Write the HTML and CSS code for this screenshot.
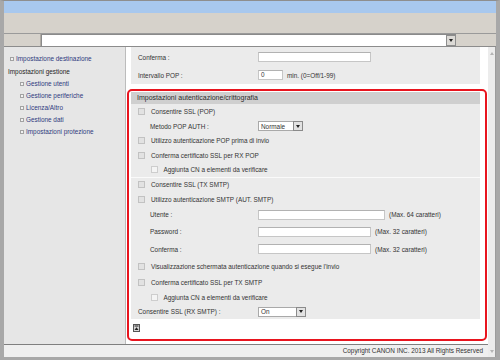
FILE: index.html
```html
<!DOCTYPE html>
<html lang="it">
<head>
<meta charset="utf-8">
<title>Impostazioni</title>
<link rel="stylesheet" href="styles.css">
</head>
<body>
<div class="window">
  <div class="titlebar"></div>
  <div class="toolbar"></div>
  <div class="addrbar">
    <div class="addr-left"></div>
    <div class="addr-input"><span class="addr-btn"><span class="tri-down"></span></span></div>
  </div>
  <div class="main">
    <div class="page">
      <div class="body">
        <nav class="nav">
          <div class="nav-item first"><span class="bullet"></span><span class="link">Impostazione destinazione</span></div>
          <div class="nav-item group">Impostazioni gestione</div>
          <div class="nav-item sub"><span class="bullet"></span><span class="link">Gestione utenti</span></div>
          <div class="nav-item sub"><span class="bullet"></span><span class="link">Gestione periferiche</span></div>
          <div class="nav-item sub"><span class="bullet"></span><span class="link">Licenza/Altro</span></div>
          <div class="nav-item sub"><span class="bullet"></span><span class="link">Gestione dati</span></div>
          <div class="nav-item sub"><span class="bullet"></span><span class="link">Impostazioni protezione</span></div>
        </nav>
        <div class="content">
          <div class="section top-section">
            <div class="frow"><span class="lbl">Conferma :</span><span class="input w113"></span></div>
            <div class="frow"><span class="lbl">Intervallo POP :</span><span class="input w25">0</span><span class="note">min. (0=Off/1-99)</span></div>
          </div>
          <div class="redbox">
            <div class="section">
              <div class="sec-head">Impostazioni autenticazione/crittografia</div>
              <div class="row r15"><span class="cb"></span>Consentire SSL (POP)</div>
              <div class="row sub"><span class="lbl">Metodo POP AUTH :</span><span class="select w45"><span class="sel-text">Normale</span><span class="sel-btn"><span class="tri-down"></span></span></span></div>
              <div class="row"><span class="cb"></span>Utilizzo autenticazione POP prima di invio</div>
              <div class="row"><span class="cb"></span>Conferma certificato SSL per RX POP</div>
              <div class="row ind"><span class="cb light"></span>Aggiunta CN a elementi da verificare</div>
              <div class="row sep r135"><span class="cb"></span>Consentire SSL (TX SMTP)</div>
              <div class="row r15"><span class="cb"></span>Utilizzo autenticazione SMTP (AUT. SMTP)</div>
              <div class="row sub r165"><span class="lbl">Utente :</span><span class="input w127"></span><span class="note">(Max. 64 caratteri)</span></div>
              <div class="row sub tall"><span class="lbl">Password :</span><span class="input w113"></span><span class="note">(Max. 32 caratteri)</span></div>
              <div class="row sub tall"><span class="lbl">Conferma :</span><span class="input w113"></span><span class="note">(Max. 32 caratteri)</span></div>
              <div class="row tall"><span class="cb"></span>Visualizzazione schermata autenticazione quando si esegue l'invio</div>
              <div class="row"><span class="cb"></span>Conferma certificato SSL per TX SMTP</div>
              <div class="row ind"><span class="cb light"></span>Aggiunta CN a elementi da verificare</div>
              <div class="row r14"><span class="lbl">Consentire SSL (RX SMTP) :</span><span class="select w48"><span class="sel-text">On</span><span class="sel-btn"><span class="tri-down"></span></span></span></div>
            </div>
            <div class="totop">
              <svg width="7" height="8" viewBox="0 0 7 8"><rect x="0.5" y="0.5" width="6" height="7" fill="#d8d8d8" stroke="#555"/><rect x="1.5" y="1.5" width="4" height="1" fill="#222"/><path d="M1.5 6 L3.5 3.2 L5.5 6 Z" fill="#222"/></svg>
            </div>
          </div>
        </div>
      </div>
      <div class="footer">Copyright CANON INC. 2013 All Rights Reserved</div>
    </div>
    <div class="scrollbar"><span class="tri-up faint"></span><span class="tri-down faint"></span></div>
  </div>
</div>
</body>
</html>
```
FILE: styles.css
```css
* { box-sizing: border-box; }
html, body { margin: 0; padding: 0; }
body {
  width: 500px;
  height: 360px;
  overflow: hidden;
  background: #a5a5a5;
  font-family: "Liberation Sans", Arial, sans-serif;
  font-size: 6.4px;
  color: #333;
}
.window {
  height: 360px;
  display: flex;
  flex-direction: column;
  border-top: 1px solid #8e8e8e;
  border-left: 4px solid #a8a8a8;
  border-right: 4px solid #a8a8a8;
  border-bottom: 3px solid #a8a8a8;
}
.titlebar { height: 12px; background: #a8c8ee; flex: none; }
.toolbar { height: 21px; background: #d6d2cb; border-bottom: 1px solid #9a9a9a; flex: none; }
.addrbar { height: 12px; display: flex; background: #d6d2cb; flex: none; }
.addr-left { width: 37px; border-right: 1px solid #b0aca5; }
.addr-input {
  width: 415px;
  background: #fff;
  border-top: 1px solid #8a8a8a;
  border-left: 1px solid #8a8a8a;
  display: flex;
  justify-content: flex-end;
  align-items: center;
}
.addr-btn {
  width: 10px;
  height: 11px;
  background: #dcdad6;
  border: 1px solid #8d8d8d;
  display: flex;
  align-items: center;
  justify-content: center;
}
.tri-down {
  width: 0; height: 0;
  border-left: 2.5px solid transparent;
  border-right: 2.5px solid transparent;
  border-top: 3px solid #222;
}
.tri-up {
  width: 0; height: 0;
  border-left: 2.5px solid transparent;
  border-right: 2.5px solid transparent;
  border-bottom: 3px solid #222;
}
.main { flex: 1; display: flex; border-top: 1px solid #8c8c8c; min-height: 0; }
.page { flex: 1; display: flex; flex-direction: column; }
.body { flex: 1; display: flex; min-height: 0; }
.nav {
  width: 122px;
  background: #e6e6e6;
  border-right: 1px solid #bcbcbc;
  padding-top: 5px;
}
.nav-item { display: flex; align-items: center; height: 12px; padding-left: 6px; }
.nav-item.first { height: 13px; }
.nav-item.group { height: 12.5px; padding-left: 4px; color: #1e1e1e; }
.nav-item.sub { padding-left: 16px; }
.bullet {
  width: 4px; height: 4px;
  border: 1px solid #a2a2a2;
  background: #f2f2f2;
  margin-right: 2px;
}
.link { color: #2e3a7e; }
.content {
  flex: 1;
  background: #fff;
  padding: 0 8px 0 5px;
}
.section { background: #ebebeb; }
.top-section { padding-top: 1px; height: 37px; }
.frow { height: 18px; display: flex; align-items: center; padding-left: 7px; }
.lbl { width: 120px; flex: none; }
.input {
  height: 10px;
  background: #fff;
  border: 1px solid #c6c6c6;
  border-top-color: #b2b2b2;
  padding-left: 2px;
  line-height: 8px;
  flex: none;
}
.w113 { width: 113px; }
.w127 { width: 127px; }
.w25 { width: 25px; }
.w45 { width: 45px; }
.w48 { width: 48px; }
.note { margin-left: 4px; }
.redbox {
  margin: 5px -7px 0 -4px;
  border: 2px solid #e8141e;
  border-radius: 5px;
  padding: 1px 5px 0 2px;
  height: 252px;
}
.sec-head {
  height: 12px;
  background: #cfcfcf;
  padding-left: 6px;
  line-height: 12px;
  font-size: 7px;
  color: #2c2c2c;
}
.row { height: 14.5px; display: flex; align-items: center; padding-left: 7px; }
.row.r15 { height: 15px; }
.row.r135 { height: 13.5px; }
.row.r165 { height: 16.5px; }
.row.r14 { height: 14px; margin-bottom: 3.5px; }
.row.tall { height: 17.5px; }
.row.sep { border-top: 1px solid #fafafa; height: 14.5px; }
.row.sub .lbl { padding-left: 12px; }
.row.ind { padding-left: 19.5px; }
.cb {
  width: 7px; height: 7px;
  border: 1px solid #c2c2c2;
  background: #e2e2e2;
  margin-right: 6px;
  flex: none;
}
.cb.light { background: #f4f4f4; border-color: #cdcdcd; }
.select {
  height: 10px;
  background: #fff;
  border: 1px solid #a9a9a9;
  display: flex;
  align-items: center;
  justify-content: space-between;
  flex: none;
}
.sel-text { padding-left: 2px; }
.sel-btn {
  width: 10px;
  height: 10px;
  margin: -1px -1px -1px 0;
  border: 1px solid #8a8a8a;
  background: #e2e2e2;
  display: flex;
  align-items: center;
  justify-content: center;
}
.totop { height: 17px; padding: 2px 0 0 2px; display: flex; align-items: flex-start; }
.totop svg { display: block; }
.footer {
  height: 13px;
  border-top: 1px solid #7f7f7f;
  background: #efefef;
  text-align: right;
  padding-right: 5px;
  line-height: 11px;
  flex: none;
}
.scrollbar {
  width: 8px;
  background: #ececec;
  border-right: 1px solid #9c9c9c;
  display: flex;
  flex-direction: column;
  align-items: center;
  justify-content: space-between;
  padding: 5px 0 4px;
}
.faint.tri-up { border-bottom-color: #b4b4b4; }
.faint.tri-down { border-top-color: #b4b4b4; }
```
